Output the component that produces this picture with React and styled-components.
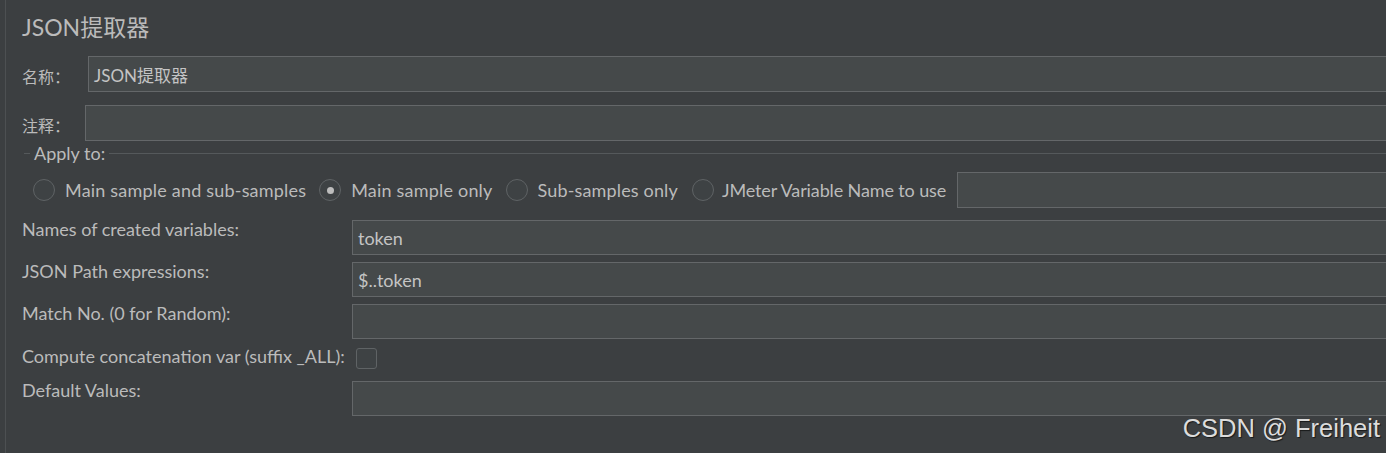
import styled, { createGlobalStyle } from "styled-components";

const Global = createGlobalStyle`
  html, body {
    margin: 0;
    padding: 0;
    background: #3c3f41;
    overflow: hidden;
  }
  #root {
    height: 453px;
    position: relative;
  }
`;

const Page = styled.div`
  height: 453px;
  margin-left: 5px;
  border-left: 1px solid #4d5052;
  padding-left: 16px;
  width: calc(100% + 20px);
  box-sizing: border-box;
  font-family: Lato, "Noto Sans CJK SC", sans-serif;
  color: #bbbbbb;
`;

const Title = styled.div`
  font-size: 23px;
  padding-top: 9px;
  height: 56px;
  box-sizing: border-box;
`;

const Row = styled.div`
  display: flex;
  align-items: center;
  height: ${(p) => p.h}px;
  margin-bottom: ${(p) => p.mb || 0}px;
`;

const CnLabel = styled.div`
  width: ${(p) => p.w}px;
  font-size: 16px;
  flex: none;
  padding-top: 4px;
`;

const Input = styled.div`
  flex: 1;
  height: 100%;
  box-sizing: border-box;
  border: 1px solid #646769;
  background: #45494a;
  font-size: 18px;
  padding: 0 5px;
  display: flex;
  align-items: center;
  color: #c4c4c4;
`;

const NameInput = styled(Input)`
  font-size: 17px;
`;

const Legend = styled.div`
  display: flex;
  align-items: center;
  height: 16px;
  margin-left: 2px;
  font-size: 18px;
  &::before {
    content: "";
    width: 6px;
    border-top: 1px solid #55595b;
    margin-right: 4px;
  }
  &::after {
    content: "";
    flex: 1;
    border-top: 1px solid #55595b;
    margin-left: 4px;
  }
`;

const RadioRow = styled.div`
  display: flex;
  align-items: center;
  height: 36px;
  margin-top: 11px;
  padding-left: 11px;
  font-size: 18px;
`;

const Radio = styled.span`
  width: 20px;
  height: 20px;
  border-radius: 50%;
  border: 1px solid #5f6365;
  background: #3e4244;
  flex: none;
  display: flex;
  align-items: center;
  justify-content: center;
  margin-right: ${(p) => p.gap || 10}px;
  &::after {
    content: "";
    display: ${(p) => (p.checked ? "block" : "none")};
    width: 7px;
    height: 7px;
    border-radius: 50%;
    background: #bdbdbd;
  }
`;

const RadioText = styled.span`
  margin-right: ${(p) => p.mr}px;
  letter-spacing: ${(p) => p.ls}px;
  white-space: nowrap;
`;

const Grid = styled.div`
  display: grid;
  grid-template-columns: 330px 1fr;
  row-gap: 7px;
  margin-top: 12px;
  font-size: 18px;
`;

const FieldLabel = styled.div`
  margin-top: -2px;
  height: ${(p) => p.h || 35}px;
  white-space: nowrap;
`;

const ComputeLabel = styled(FieldLabel)`
  display: flex;
  grid-column: 1 / 3;
  margin-top: -1px;
`;

const FieldInput = styled(Input)`
  height: 35px;
  flex: none;
`;

const Check = styled.span`
  width: 19px;
  height: 19px;
  border: 1px solid #5f6365;
  border-radius: 3px;
  background: #3e4244;
  margin: 3px 0 0 11px;
  display: block;
`;

const Watermark = styled.div`
  position: absolute;
  right: 6px;
  bottom: 10px;
  font-family: "Liberation Sans", Arial, sans-serif;
  font-size: 25.5px;
  color: #dcdcdc;
  text-shadow: 1px 1px 1px rgba(0, 0, 0, 0.6);
`;

export default function App() {
  const fields = [
    ["Names of created variables:", "token"],
    ["JSON Path expressions:", "$..token"],
    ["Match No. (0 for Random):", ""],
  ];
  return (
    <>
      <Global />
      <Page>
        <Title>JSON提取器</Title>
        <Row h={36} mb={13}>
          <CnLabel w={66}>名称：</CnLabel>
          <NameInput>JSON提取器</NameInput>
        </Row>
        <Row h={36} mb={4}>
          <CnLabel w={63}>注释：</CnLabel>
          <Input />
        </Row>
        <Legend>Apply to:</Legend>
        <RadioRow>
          <Radio />
          <RadioText mr={13} ls={0.2}>Main sample and sub-samples</RadioText>
          <Radio checked />
          <RadioText mr={13} ls={0.2}>Main sample only</RadioText>
          <Radio />
          <RadioText mr={14} ls={0.15}>Sub-samples only</RadioText>
          <Radio gap={8} />
          <RadioText mr={11} ls={-0.12}>JMeter Variable Name to use</RadioText>
          <Input />
        </RadioRow>
        <Grid>
          {fields.map(([l, v]) => [
            <FieldLabel key={l}>{l}</FieldLabel>,
            <FieldInput key={l + "i"}>{v}</FieldInput>,
          ])}
          <ComputeLabel h={29}>
            Compute concatenation var (suffix _ALL):
            <Check />
          </ComputeLabel>
          <FieldLabel>Default Values:</FieldLabel>
          <FieldInput />
        </Grid>
      </Page>
      <Watermark>CSDN @ Freiheit</Watermark>
    </>
  );
}
